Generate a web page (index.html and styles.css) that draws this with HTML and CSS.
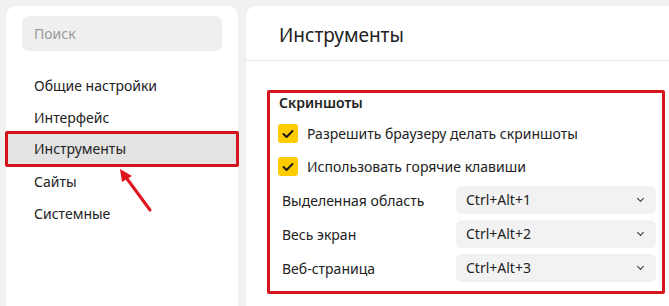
FILE: index.html
```html
<!DOCTYPE html>
<html>
  <head>
    <title>Настройки</title>
    <link rel="stylesheet" href="styles.css">
  </head>
  <body>
    <div class="page">
      <aside class="sidebar">
        <div class="search">Поиск</div>
        <nav class="menu">
          <div class="menu-item">Общие настройки</div>
          <div class="menu-item">Интерфейс</div>
          <div class="menu-item active">Инструменты</div>
          <div class="menu-item">Сайты</div>
          <div class="menu-item">Системные</div>
        </nav>
      </aside>

      <main class="content">
        <div class="content-head">Инструменты</div>
        <section class="group">
          <div class="group-title">Скриншоты</div>

          <div class="checks">
            <label class="check-row">
              <span class="checkbox">
                <svg width="12" height="10" viewBox="0 0 12 10">
                  <path d="M1.5 5 L4.6 8 L10.5 2" fill="none" stroke="#1a1a1a" stroke-width="2" stroke-linecap="round" stroke-linejoin="round"/>
                </svg>
              </span>
              Разрешить браузеру делать скриншоты
            </label>
            <label class="check-row">
              <span class="checkbox">
                <svg width="12" height="10" viewBox="0 0 12 10">
                  <path d="M1.5 5 L4.6 8 L10.5 2" fill="none" stroke="#1a1a1a" stroke-width="2" stroke-linecap="round" stroke-linejoin="round"/>
                </svg>
              </span>
              Использовать горячие клавиши
            </label>
          </div>

          <div class="keys">
            <div class="key-row">
              <span class="key-label">Выделенная область</span>
              <div class="select">Ctrl+Alt+1<span class="chevron"></span></div>
            </div>
            <div class="key-row">
              <span class="key-label">Весь экран</span>
              <div class="select">Ctrl+Alt+2<span class="chevron"></span></div>
            </div>
            <div class="key-row">
              <span class="key-label">Веб-страница</span>
              <div class="select">Ctrl+Alt+3<span class="chevron"></span></div>
            </div>
          </div>
        </section>
      </main>
    </div>

    <!-- pointer arrow drawn over the sidebar -->
    <svg class="arrow" width="60" height="60" viewBox="0 0 60 60">
      <line x1="40" y1="50" x2="15" y2="16" stroke="#e0141e" stroke-width="3" stroke-linecap="round"/>
      <polygon points="10,9 22,16 12,22" fill="#e0141e"/>
    </svg>
  </body>
</html>
```

FILE: styles.css
```css
body {
  margin: 0;
  background: #f1f1f1;
  font-family: "Noto Sans", "Open Sans", sans-serif;
  font-size: 14px;
  color: #222;
  height: 306px;
  overflow: hidden;
}
.page {
  display: flex;
  gap: 8px;
  padding: 6px 0 0 6px;
  height: 300px;
}
.sidebar {
  width: 232px;
  flex: none;
  background: #fff;
  border-radius: 10px 10px 0 0;
  padding-top: 10px;
}
.search {
  margin: 0 16px;
  height: 35px;
  line-height: 35px;
  padding-left: 12px;
  background: #efefef;
  border-radius: 7px;
  color: #9a9a9a;
  font-size: 14px;
}
.menu {
  margin-top: 19px;
}
.menu-item {
  height: 32px;
  line-height: 32px;
  padding-left: 28px;
}
.menu-item.active {
  background: #e3e3e3;
  margin: -3px -1px -1px;
  padding-left: 26px;
  height: 30px;
  line-height: 30px;
  border: 3px solid #d4131c;
  border-radius: 2px;
}
.content {
  flex: 1;
  background: #fff;
  border-radius: 10px 0 0 0;
}
.content-head {
  height: 54px;
  line-height: 58px;
  padding-left: 33px;
  font-size: 19px;
  border-bottom: 1px solid #e8e8e8;
}
.group {
  margin: 29px 4px 0 21px;
  border: 3px solid #d4131c;
  border-radius: 2px;
  padding: 0 6px 9px 9px;
}
.group-title {
  line-height: 20px;
  font-weight: 600;
}
.checks {
  margin-top: 4px;
}
.check-row {
  display: flex;
  align-items: center;
  height: 33px;
  margin-left: -1px;
}
.checkbox {
  width: 20px;
  height: 19px;
  background: #ffcc00;
  border-radius: 3px;
  display: flex;
  align-items: center;
  justify-content: center;
  margin-right: 9px;
}
.keys {
  display: flex;
  flex-direction: column;
  gap: 6px;
  margin-top: 3px;
}
.key-row {
  display: flex;
  align-items: center;
  height: 28px;
}
.key-label {
  padding-left: 3px;
}
.select {
  margin-left: auto;
  width: 190px;
  height: 28px;
  line-height: 28px;
  padding-left: 10px;
  background: #f2f2f2;
  border-radius: 6px;
  position: relative;
}
.chevron {
  position: absolute;
  right: 13px;
  top: 10px;
  width: 4px;
  height: 4px;
  border-right: 1.5px solid #333;
  border-bottom: 1.5px solid #333;
  transform: rotate(45deg);
}
.arrow {
  position: absolute;
  left: 110px;
  top: 160px;
}
```
